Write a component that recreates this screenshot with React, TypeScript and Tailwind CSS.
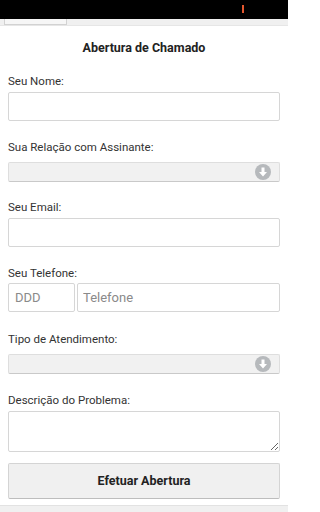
import React from 'react';

function SelectArrow() {
  return (
    <svg width="16" height="16" viewBox="0 0 16 16" className="shrink-0">
      <circle cx="8" cy="8" r="8" fill="#b6b9bc" />
      <path d="M6.5 3.4h3v4.6h2.5L8 12.4 4 8h2.5z" fill="#ffffff" />
    </svg>
  );
}

function Label({ children, className = '' }: { children: React.ReactNode; className?: string }) {
  return <div className={`text-[11.5px] leading-[14px] text-[#333333] ${className}`}>{children}</div>;
}

function FakeSelect() {
  return (
    <div className="mt-[8px] flex h-[20px] items-center justify-end rounded-[2px] border border-[#dedede] border-b-[#c9c9c9] bg-[#f1f1f1] pr-[8px]">
      <SelectArrow />
    </div>
  );
}

export default function App() {
  return (
    <div className="flex h-[512px] w-[288px] flex-col overflow-hidden bg-white font-['Roboto',sans-serif]">
      {/* Status bar */}
      <div className="relative h-[19px] shrink-0 bg-black">
        <div className="absolute left-[242px] top-[5px] h-[8px] w-[2px] bg-[#e4572e]" />
      </div>

      {/* Browser tab strip */}
      <div className="h-[7px] shrink-0 border-b border-[#e6e6e6] bg-[#f0f0f0]">
        <div className="ml-[4px] h-[6px] w-[63px] border border-t-0 border-[#d2d2d2] bg-[#f6f6f6]" />
      </div>

      <div className="flex flex-1 flex-col px-[8px]">
        <h1 className="mt-[14px] text-center text-[12.5px] font-bold leading-[16px] text-[#222222]">
          Abertura de Chamado
        </h1>

        <Label className="mt-[18px] mb-[4px]">Seu Nome:</Label>
        <input className="h-[29px] w-full rounded-[2px] border border-[#d6d6d6] bg-white outline-none" />

        <Label className="mt-[19px]">Sua Relação com Assinante:</Label>
        <FakeSelect />

        <Label className="mt-[18px] mb-[4px]">Seu Email:</Label>
        <input className="h-[29px] w-full rounded-[2px] border border-[#d6d6d6] bg-white outline-none" />

        <Label className="mt-[19px] mb-[3px]">Seu Telefone:</Label>
        <div className="flex h-[29px]">
          <input
            placeholder="DDD"
            className="h-full w-[67px] rounded-[2px] border border-[#d6d6d6] bg-white px-[6px] text-[13px] text-[#333] outline-none placeholder:text-[#8a8a8a]"
          />
          <input
            placeholder="Telefone"
            className="ml-[2px] h-full min-w-0 flex-1 rounded-[2px] border border-[#d6d6d6] bg-white px-[5px] text-[13px] text-[#333] outline-none placeholder:text-[#8a8a8a]"
          />
        </div>

        <Label className="mt-[20px]">Tipo de Atendimento:</Label>
        <FakeSelect />

        <Label className="mt-[19px] mb-[4px]">Descrição do Problema:</Label>
        <textarea className="h-[41px] w-full resize rounded-[2px] border border-[#d6d6d6] bg-white outline-none" />

        <button className="mt-[11px] h-[36px] w-full rounded-[2px] border border-[#d4d4d4] border-b-[#bdbdbd] bg-[#f0f0f0] text-[12.5px] font-bold text-[#222222]">
          Efetuar Abertura
        </button>
      </div>

      {/* Bottom bar */}
      <div className="h-[7px] shrink-0 border-t border-[#e2e2e2] bg-[#f0f0f0]" />
    </div>
  );
}
